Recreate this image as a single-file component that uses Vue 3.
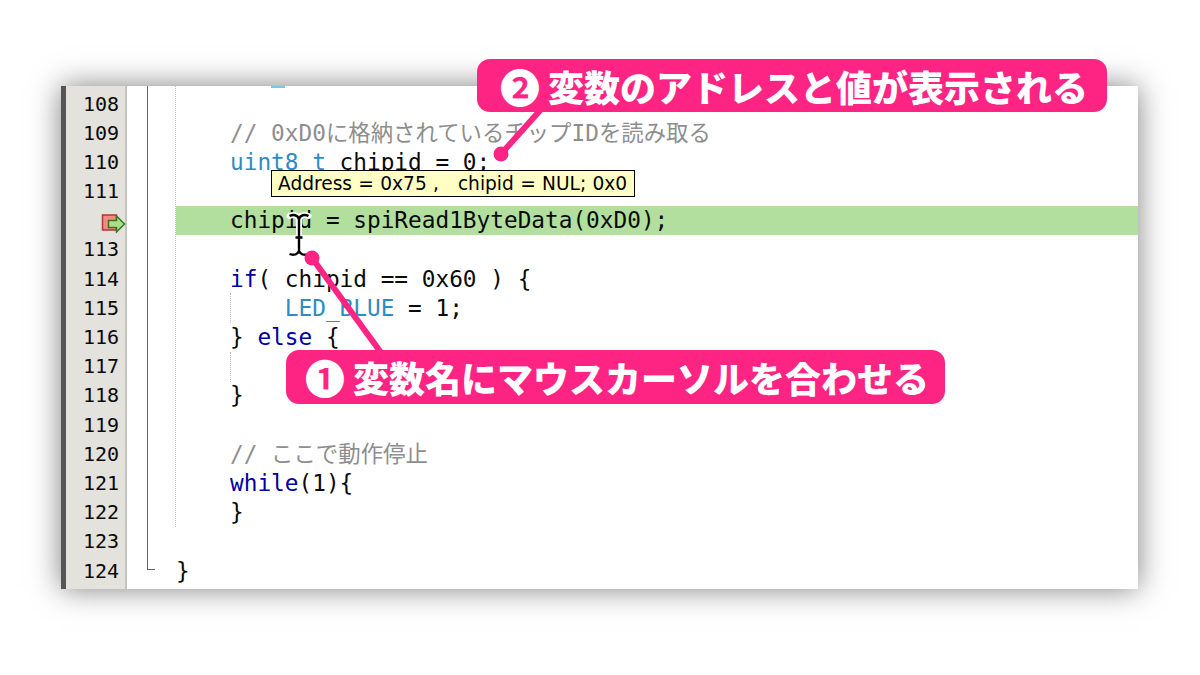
<script setup>
const rows = [
  { n: 108, parts: [] },
  { n: 109, parts: [{ t: '// 0xD0', c: 'cm' }, { t: 'に格納されているチップ', c: 'cm cj' }, { t: 'ID', c: 'cm' }, { t: 'を読み取る', c: 'cm cj' }] },
  { n: 110, parts: [{ t: 'uint8_t', c: 'ty' }, { t: ' chipid = 0;' }] },
  { n: 111, parts: [] },
  { n: 112, hl: true, parts: [{ t: 'chipid = spiRead1ByteData(0xD0);' }] },
  { n: 113, parts: [] },
  { n: 114, parts: [{ t: 'if', c: 'kw' }, { t: '( chipid == 0x60 ) {' }] },
  { n: 115, parts: [{ t: '    ' }, { t: 'LED_BLUE', c: 'ty' }, { t: ' = 1;' }] },
  { n: 116, parts: [{ t: '} ' }, { t: 'else', c: 'kw' }, { t: ' {' }] },
  { n: 117, parts: [] },
  { n: 118, parts: [{ t: '}' }] },
  { n: 119, parts: [] },
  { n: 120, parts: [{ t: '// ', c: 'cm' }, { t: 'ここで動作停止', c: 'cm cj' }] },
  { n: 121, parts: [{ t: 'while', c: 'kw' }, { t: '(1){' }] },
  { n: 122, parts: [{ t: '}' }] },
  { n: 123, parts: [] },
  { n: 124, top: true, parts: [{ t: '}' }] }
]
const tipText = 'Address = 0x75 ,   chipid = NUL; 0x0'
</script>

<template>
  <div class="page">
    <div class="window">
      <div class="strip"></div>
      <div class="gutter">
        <div v-for="r in rows" :key="r.n" class="num">
          <svg v-if="r.hl" class="pc" width="26" height="22" viewBox="0 0 26 22">
            <rect x="2.500" y="3" width="14" height="15" fill="#f58a80" stroke="#a83c34" stroke-width="1.500" />
            <path d="M8.500 8.500h8v-4.500l8 8-8 8v-4.500h-8z" fill="#a8e08c" stroke="#2f7a20" stroke-width="1.500" />
          </svg>
          <template v-else>{{ r.n }}</template>
        </div>
      </div>
      <div class="fold"></div>
      <div class="code">
        <span class="stub"></span>
        <span class="guide g1"></span>
        <span class="guide g2"></span>
        <span class="guide g3"></span>
        <div v-for="r in rows" :key="r.n" class="row" :class="{ hl: r.hl, top: r.top }">
          <span v-for="(p, i) in r.parts" :key="i" :class="p.c">{{ p.t }}</span>
        </div>
      </div>
    </div>

    <div class="tip">{{ tipText }}</div>

    <svg class="ibeam" width="26" height="46" viewBox="0 0 26 46">
      <path d="M3.500 4c4-2 8-1 9.500 3c1.500-4 5.500-5 9.500-3M13 7v17" fill="none" stroke="#fff" stroke-width="6" stroke-linecap="round" />
      <path d="M3.500 4c4-2 8-1 9.500 3c1.500-4 5.500-5 9.500-3M13 7v32M9.500 25.500h7M3.500 42c4 1.500 8 .5 9.500-3c1.500 3.500 5.500 4.500 9.500 3" fill="none" stroke="#000" stroke-width="2.400" />
    </svg>

    <svg class="leaders" width="1200" height="675" viewBox="0 0 1200 675">
      <path d="M501 154L544 106" stroke="#fe2483" stroke-width="6" />
      <circle cx="501" cy="154" r="7.500" fill="#fe2483" />
      <path d="M312 258L382 354" stroke="#fe2483" stroke-width="6" />
      <circle cx="312" cy="258" r="7.500" fill="#fe2483" />
    </svg>

    <div class="callout c2"><span class="mark">❷</span><span>変数のアドレスと値が表示される</span></div>
    <div class="callout c1"><span class="mark">❶</span><span>変数名にマウスカーソルを合わせる</span></div>
  </div>
</template>

<style>
html, body { margin: 0; background: #fff; }
</style>

<style scoped>
.page {
  position: relative;
  width: 1200px;
  height: 675px;
  overflow: hidden;
  background: #fff;
  padding: 86px 0 0 61px;
  box-sizing: border-box;
}
.window {
  display: flex;
  width: 1077px;
  height: 503px;
  background: #fff;
  box-shadow: 0 0 28px rgba(0, 0, 0, .5);
}
.strip { width: 5px; background: #555; }
.gutter {
  width: 61px;
  padding-top: 3.500px;
  box-sizing: border-box;
  background: #e3e2dc;
  border-right: 2px solid #c4c4be;
  font: 20px/29.190px "DejaVu Sans Mono", monospace;
  color: #0a0a0a;
  text-align: right;
}
.num { height: 29.190px; padding-right: 6px; position: relative; }
.pc { position: absolute; left: 34px; top: 6px; }
.fold {
  position: relative;
  width: 49px;
}
.fold::before {
  content: "";
  position: absolute;
  left: 20px;
  top: 0;
  width: 8px;
  height: 484px;
  box-sizing: border-box;
  border-left: 1.500px solid #666;
  border-bottom: 1px solid #666;
}
.code {
  position: relative;
  flex: 1;
  padding-top: 3.500px;
  font: 22.760px/29.600px "DejaVu Sans Mono", "Noto Sans CJK JP", monospace;
  color: #0a0a0a;
  white-space: pre;
}
.row { height: 29.190px; padding-left: 54px; }
.row.top { padding-left: 0; }
.row.hl { background: #b2df9e; }
.cm { color: #8e8e8e; }
.cj { font-size: 22.400px; }
.ty { color: #2d8cc4; }
.kw { color: #0000a5; }
.stub { position: absolute; left: 95px; top: 0; width: 14px; height: 2px; background: #7cc6ea; }
.guide { position: absolute; width: 0; border-left: 1px dotted #bdbdbd; }
.g1 { left: -1px; top: 0; height: 441px; }
.g2 { left: 54px; top: 207px; height: 30px; }
.g3 { left: 54px; top: 266px; height: 30px; }
.tip {
  position: absolute;
  left: 271px;
  top: 170px;
  box-sizing: border-box;
  width: 364px;
  height: 27px;
  padding-left: 6px;
  border: 1.500px solid #000;
  background: #ffffc4;
  color: #000;
  font: 18.600px/25px "DejaVu Sans", sans-serif;
  word-spacing: .4px;
  white-space: pre;
}
.ibeam { position: absolute; left: 286px; top: 212px; }
.leaders { position: absolute; left: 0; top: 0; }
.callout {
  position: absolute;
  display: flex;
  align-items: center;
  gap: 12px;
  box-sizing: border-box;
  height: 53px;
  border-radius: 13px;
  background: #fe2483;
  color: #fff;
  font: 900 36px/1 "Noto Sans CJK JP", sans-serif;
  white-space: nowrap;
}
.mark {
  width: 36px;
  text-align: center;
  font-size: 40px;
  font-weight: 700;
  font-family: "Noto Sans CJK JP", "DejaVu Sans", sans-serif;
}
.c2 { left: 477px; top: 59px; width: 630px; padding-left: 23px; }
.c1 { left: 286px; top: 350px; width: 659px; height: 54px; padding-left: 19px; }
</style>
